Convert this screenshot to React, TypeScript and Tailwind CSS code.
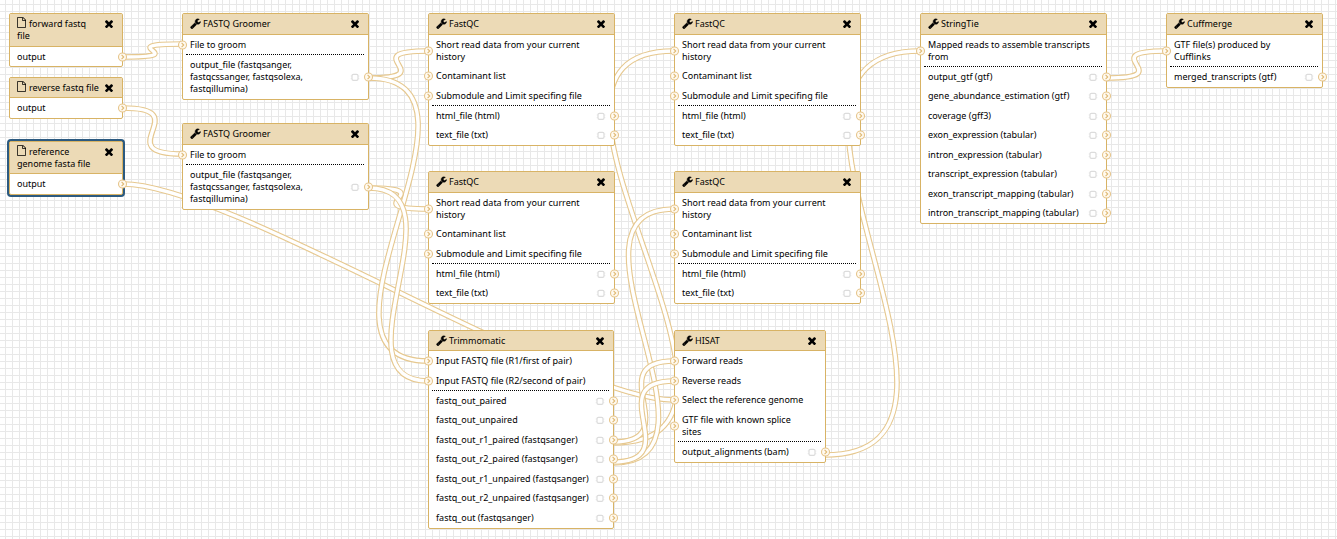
type Port = string;

interface WorkflowNode {
  id: string;
  title: string;
  kind: 'data' | 'tool';
  place: string;
  compact?: boolean;
  selected?: boolean;
  inputs: Port[];
  outputs: Port[];
}

const fastqcInputs = [
  'Short read data from your current\nhistory',
  'Contaminant list',
  'Submodule and Limit specifing file',
];
const fastqcOutputs = ['html_file (html)', 'text_file (txt)'];
const groomerOutputs = ['output_file (fastqsanger,\nfastqcssanger, fastqsolexa,\nfastqillumina)'];

const nodes: WorkflowNode[] = [
  {
    id: 'forward',
    title: 'forward fastq\nfile',
    kind: 'data',
    place: 'left-[9px] top-[13px] w-[114px]',
    inputs: [],
    outputs: ['output'],
  },
  {
    id: 'reverse',
    title: 'reverse fastq file',
    kind: 'data',
    place: 'left-[9px] top-[77px] w-[114px]',
    compact: true,
    inputs: [],
    outputs: ['output'],
  },
  {
    id: 'reference',
    title: 'reference\ngenome fasta file',
    kind: 'data',
    place: 'left-[9px] top-[141px] w-[114px]',
    compact: true,
    selected: true,
    inputs: [],
    outputs: ['output'],
  },
  {
    id: 'groomer-1',
    title: 'FASTQ Groomer',
    kind: 'tool',
    place: 'left-[182px] top-[13px] w-[187px]',
    inputs: ['File to groom'],
    outputs: groomerOutputs,
  },
  {
    id: 'groomer-2',
    title: 'FASTQ Groomer',
    kind: 'tool',
    place: 'left-[182px] top-[123px] w-[187px]',
    inputs: ['File to groom'],
    outputs: groomerOutputs,
  },
  {
    id: 'fastqc-1',
    title: 'FastQC',
    kind: 'tool',
    place: 'left-[428px] top-[13px] w-[187px]',
    inputs: fastqcInputs,
    outputs: fastqcOutputs,
  },
  {
    id: 'fastqc-2',
    title: 'FastQC',
    kind: 'tool',
    place: 'left-[428px] top-[171px] w-[187px]',
    inputs: fastqcInputs,
    outputs: fastqcOutputs,
  },
  {
    id: 'trimmomatic',
    title: 'Trimmomatic',
    kind: 'tool',
    place: 'left-[428px] top-[330px] w-[186px]',
    compact: true,
    inputs: ['Input FASTQ file (R1/first of pair)', 'Input FASTQ file (R2/second of pair)'],
    outputs: [
      'fastq_out_paired',
      'fastq_out_unpaired',
      'fastq_out_r1_paired (fastqsanger)',
      'fastq_out_r2_paired (fastqsanger)',
      'fastq_out_r1_unpaired (fastqsanger)',
      'fastq_out_r2_unpaired (fastqsanger)',
      'fastq_out (fastqsanger)',
    ],
  },
  {
    id: 'fastqc-3',
    title: 'FastQC',
    kind: 'tool',
    place: 'left-[674px] top-[13px] w-[187px]',
    inputs: fastqcInputs,
    outputs: fastqcOutputs,
  },
  {
    id: 'fastqc-4',
    title: 'FastQC',
    kind: 'tool',
    place: 'left-[674px] top-[171px] w-[187px]',
    inputs: fastqcInputs,
    outputs: fastqcOutputs,
  },
  {
    id: 'hisat',
    title: 'HISAT',
    kind: 'tool',
    place: 'left-[674px] top-[330px] w-[152px]',
    compact: true,
    inputs: [
      'Forward reads',
      'Reverse reads',
      'Select the reference genome',
      'GTF file with known splice\nsites',
    ],
    outputs: ['output_alignments (bam)'],
  },
  {
    id: 'stringtie',
    title: 'StringTie',
    kind: 'tool',
    place: 'left-[920px] top-[13px] w-[187px]',
    inputs: ['Mapped reads to assemble transcripts\nfrom'],
    outputs: [
      'output_gtf (gtf)',
      'gene_abundance_estimation (gtf)',
      'coverage (gff3)',
      'exon_expression (tabular)',
      'intron_expression (tabular)',
      'transcript_expression (tabular)',
      'exon_transcript_mapping (tabular)',
      'intron_transcript_mapping (tabular)',
    ],
  },
  {
    id: 'cuffmerge',
    title: 'Cuffmerge',
    kind: 'tool',
    place: 'left-[1166px] top-[13px] w-[157px]',
    inputs: ['GTF file(s) produced by\nCufflinks'],
    outputs: ['merged_transcripts (gtf)'],
  },
];

// Each connection runs from an output terminal to an input terminal: x1, y1, x2, y2.
const connections: [number, number, number, number][] = [
  [123, 57, 182, 44],
  [123, 108, 182, 154],
  [123, 184, 674, 400],
  [369, 78, 428, 51],
  [369, 78, 428, 361],
  [369, 188, 428, 209],
  [369, 188, 428, 381],
  [613, 443, 674, 51],
  [613, 463, 674, 209],
  [613, 442, 674, 361],
  [613, 462, 674, 381],
  [825, 455, 920, 51],
  [1107, 78, 1166, 51],
];

function wirePath([x1, y1, x2, y2]: [number, number, number, number]) {
  const shift = Math.min(Math.max(Math.abs(y2 - y1) / 2, 75), 225);
  return `M${x1} ${y1}C${x1 + shift} ${y1} ${x2 - shift} ${y2} ${x2} ${y2}`;
}

function WrenchIcon() {
  return (
    <svg viewBox="0 0 1792 1792" className="-mt-0.5 mr-0.5 inline-block size-[11px] align-middle" fill="currentColor" stroke="currentColor" strokeWidth="60" aria-hidden="true">
      <path d="M448 1472q0-26-19-45t-45-19-45 19-19 45 19 45 45 19 45-19 19-45zm644-420l-682 682q-37 37-90 37-52 0-91-37l-106-108q-38-36-38-90 0-53 38-91l681-681q39 98 114.500 173.500t173.500 114.500zm634-435q0 39-23 106-47 134-164.500 217.500t-258.500 83.500q-185 0-316.500-131.500t-131.500-316.500 131.500-316.500 316.500-131.500q58 0 121.500 16.500t107.500 46.500q16 11 16 28t-16 28l-293 169v224l193 107q5-3 79-48.500t135.500-81 70.500-35.500q15 0 23.500 10t8.500 25z" />
    </svg>
  );
}

function FileIcon() {
  return (
    <svg viewBox="128 0 1536 1792" className="-mt-1 mr-[3px] inline-block h-[11px] w-[9px] align-middle" fill="currentColor" aria-hidden="true">
      <path d="M1596 380q28 28 48 76t20 88v1152q0 40-28 68t-68 28h-1344q-40 0-68-28t-28-68v-1600q0-40 28-68t68-28h896q40 0 88 20t76 48zm-444-244v376h376q-10-29-22-41l-313-313q-12-12-41-22zm384 1528v-1024h-416q-40 0-68-28t-28-68v-416h-768v1536h1280z" />
    </svg>
  );
}

function CloseIcon() {
  return (
    <svg viewBox="302 302 1188 1188" className="size-2" fill="currentColor" aria-hidden="true">
      <path d="M1490 1322q0 40-28 68l-136 136q-28 28-68 28t-68-28l-294-294-294 294q-28 28-68 28t-68-28l-136-136q-28-28-28-68t28-68l294-294-294-294q-28-28-28-68t28-68l136-136q28-28 68-28t68 28l294 294 294-294q28-28 68-28t68 28l136 136q28 28 28 68t-28 68l-294 294 294 294q28 28 28 68z" transform="translate(0 -42)" />
    </svg>
  );
}

function Terminal({ side, label }: { side: string; label: string }) {
  return (
    <button type="button" aria-label={label} className={`absolute top-1/2 size-[9px] -translate-y-1/2 ${side}`}>
      <svg viewBox="0 0 9 9" className="size-full overflow-visible" fill="none" aria-hidden="true">
        <circle cx="4.5" cy="4.5" r="4" fill="#fffaf0" stroke="#e6c58c" strokeWidth="1.1" />
        <path d="M3.600 2.400L5.700 4.500L3.600 6.600" stroke="#dfb872" strokeWidth="1.1" />
      </svg>
    </button>
  );
}

function OutputMark({ label }: { label: string }) {
  return (
    <button type="button" aria-label={label} className="absolute right-[9px] top-1/2 size-2 -translate-y-1/2">
      <svg viewBox="0 0 8 8" className="size-full overflow-visible" fill="none" stroke="#dcdcdc" aria-hidden="true">
        <rect x="1" y="1.300" width="6" height="6" rx="1.400" strokeWidth="1.200" />
        <path d="M0.200 2.600v0.900M0.200 5.200v0.900M7.800 2.600v0.900M7.800 5.200v0.900" strokeWidth="0.700" />
      </svg>
    </button>
  );
}

function NodeCard({ node }: { node: WorkflowNode }) {
  const isTool = node.kind === 'tool';
  return (
    <section
      className={`absolute rounded-[2px] border border-[#d8b365] bg-white ${node.place} ${
        node.selected ? 'ring-2 ring-[#2c5a80]' : ''
      }`}
    >
      <header
        className={`flex items-start justify-between border-b border-[#d8b365] bg-[#ecdab6] pl-[7px] pt-1 ${
          node.compact ? 'pb-[3px]' : 'pb-1'
        } pr-[9px]`}
      >
        <h2 className="whitespace-pre">
          {isTool ? <WrenchIcon /> : <FileIcon />}
          {node.title}
        </h2>
        <button type="button" aria-label={`Remove ${node.title}`} className="mt-0.5 shrink-0 text-black">
          <CloseIcon />
        </button>
      </header>
      {node.inputs.length > 0 && (
        <ul>
          {node.inputs.map((input) => (
            <li key={input} className="relative whitespace-pre px-[7px] pb-1 pt-1 nth-last-[odd]:pb-[3px]">
              <Terminal side="-left-[5px]" label={`Connect input ${input}`} />
              {input}
            </li>
          ))}
        </ul>
      )}
      {isTool && <hr className="ml-[3px] mr-1 border-t border-dotted border-black" />}
      <ul>
        {node.outputs.map((output) => (
          <li
            key={output}
            className={`relative whitespace-pre px-[7px] pt-1 ${
              node.id === 'forward' ? 'pb-[3px]' : 'pb-[3px] last:pb-1 even:pb-1'
            }`}
          >
            {output}
            {isTool && <OutputMark label={`Mark ${output} as workflow output`} />}
            <Terminal side="-right-[5px]" label={`Connect output ${output}`} />
          </li>
        ))}
      </ul>
    </section>
  );
}

export default function App() {
  return (
    <main className="relative min-h-screen w-full overflow-hidden bg-white bg-[linear-gradient(to_right,#e8e8e8_1px,transparent_1px),linear-gradient(to_bottom,#e8e8e8_1px,transparent_1px)] bg-[length:7px_7px] bg-[position:5px_4px] font-['Noto_Sans','Open_Sans',sans-serif] text-[9px] leading-[12px] text-black">
      <svg className="absolute inset-0 size-full" fill="none" aria-hidden="true">
        {connections.map((connection) => {
          const d = wirePath(connection);
          return (
            <g key={d}>
              <path d={d} stroke="#e6c88f" strokeWidth="5.6" />
              <path d={d} stroke="#ffffff" strokeWidth="3.4" />
            </g>
          );
        })}
      </svg>
      {nodes.map((node) => (
        <NodeCard key={node.id} node={node} />
      ))}
    </main>
  );
}
